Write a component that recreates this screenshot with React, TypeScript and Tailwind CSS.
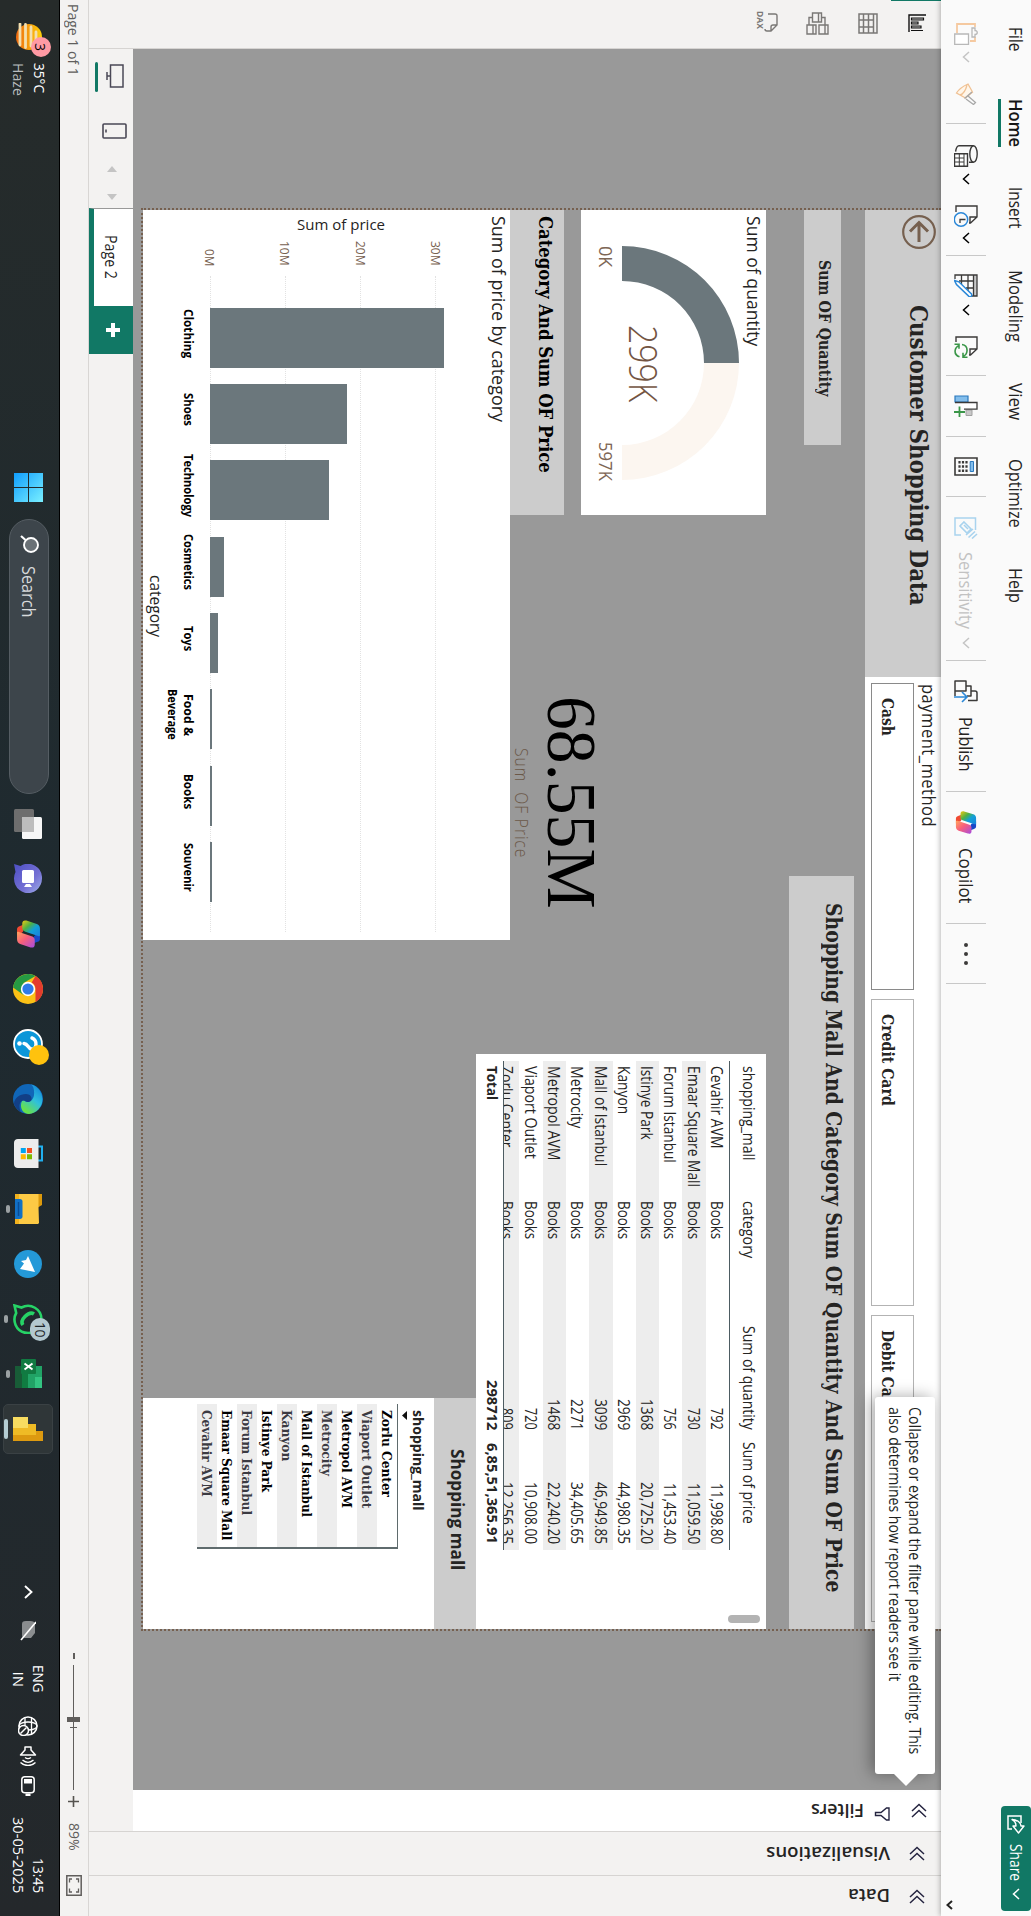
import { useLayoutEffect, useRef, useState } from "react";
import type { ReactNode } from "react";

/* Single line of text stretched to the width of its box. */
function T({ className = "", children }: { className?: string; children: ReactNode }) {
  const box = useRef<HTMLSpanElement>(null);
  const ink = useRef<HTMLSpanElement>(null);
  const [k, setK] = useState(1);
  useLayoutEffect(() => {
    const fit = () => {
      if (box.current && ink.current && ink.current.offsetWidth) {
        setK(box.current.offsetWidth / ink.current.offsetWidth);
      }
    };
    fit();
    document.fonts?.ready.then(fit);
  }, []);
  return (
    <span ref={box} className={`block shrink-0 whitespace-pre ${className}`}>
      <span ref={ink} className="inline-block origin-left" style={{ transform: `scaleX(${k})` }}>
        {children}
      </span>
    </span>
  );
}

const serif = "font-['DejaVu_Serif_Condensed','DejaVu_Serif',serif] font-bold";

function Svg({ className, vb, children }: { className: string; vb: string; children: ReactNode }) {
  return (
    <svg className={`block shrink-0 ${className}`} viewBox={vb} preserveAspectRatio="none" fill="none">
      {children}
    </svg>
  );
}

const Chev = ({ className = "text-[#252423]" }: { className?: string }) => (
  <Svg className={`h-[8px] w-[12px] ${className}`} vb="0 0 12 8">
    <path d="M1 1l5 5.5L11 1" stroke="currentColor" strokeWidth="1.5" />
  </Svg>
);

const Div = ({ className = "" }: { className?: string }) => (
  <span className={`h-[40px] w-px shrink-0 bg-[#c8c8c8] ${className}`} />
);

function Copilot({ className }: { className: string }) {
  return (
    <Svg className={className} vb="0 0 24 24">
      <defs>
        <linearGradient id="cpA" x1="0" y1="1" x2="1" y2="0">
          <stop offset="0" stopColor="#f2c811" />
          <stop offset=".35" stopColor="#4fb043" />
          <stop offset=".6" stopColor="#12a0d8" />
          <stop offset="1" stopColor="#1a80dc" />
        </linearGradient>
        <linearGradient id="cpB" x1="0" y1="1" x2="1" y2="0">
          <stop offset="0" stopColor="#ffa45c" />
          <stop offset=".45" stopColor="#f8607a" />
          <stop offset="1" stopColor="#a64be0" />
        </linearGradient>
      </defs>
      <path d="M11 1h5c1.500 0 2.200.8 2.700 2.300L20 7h-4.500c-1.600 0-2.300-.8-2.800-2.300z" fill="#1848c8" />
      <path d="M13 23H8c-1.500 0-2.200-.8-2.700-2.300L4 17h4.500c1.600 0 2.300.8 2.800 2.300z" fill="#f04a32" />
      <path d="M7.500 1H13c1 0 1 .8.700 1.800L10 15c-.6 2-1.500 3-3.500 3H3C.5 18 0 16 .5 14L3.500 4C4.200 2 5.500 1 7.500 1z" fill="url(#cpA)" />
      <path d="M16.500 23H11c-1 0-1-.8-.7-1.800L14 9c.6-2 1.500-3 3.500-3H21c2.500 0 3 2 2.500 4l-3 10c-.7 2-2 3-4 3z" fill="url(#cpB)" />
    </Svg>
  );
}

function Ribbon() {
  const tab = "text-[18px] leading-[20px] text-[#252423]";
  return (
    <header className="relative z-20 h-[90px] shrink-0 bg-[#fafafa] shadow-[0_1px_5px_rgba(0,0,0,0.28)]">
      <div className="flex h-[45px] items-start pt-[5px]">
        <T className={`ml-[27px] w-[25px] ${tab}`}>File</T>
        <div className="ml-[47px] h-[28px] w-[48px] border-b-[3px] border-[#117865]">
          <T className="w-[48px] text-[18px] leading-[20px] font-semibold text-[#151515]">Home</T>
        </div>
        <T className={`ml-[40px] w-[42px] ${tab}`}>Insert</T>
        <T className={`ml-[41px] w-[72px] ${tab}`}>Modeling</T>
        <T className={`ml-[41px] w-[37px] ${tab}`}>View</T>
        <T className={`ml-[39px] w-[69px] ${tab}`}>Optimize</T>
        <T className={`ml-[40px] w-[35px] ${tab}`}>Help</T>
        <button className="mt-[-5px] mr-[5px] ml-auto flex h-[30px] w-[105px] items-center rounded-[4px] bg-[#117865] text-white">
          <Svg className="ml-[9px] h-[18px] w-[19px]" vb="0 0 19 18">
            <path d="M8 4H1v13h13v-4" stroke="#fff" strokeWidth="1.500" />
            <path d="M11 1l7 5.500-7 5.500V9c-3 0-5 1-6.500 4C5 8 7.500 4.500 11 4z" stroke="#fff" strokeWidth="1.400" strokeLinejoin="round" />
          </Svg>
          <T className="ml-[10px] w-[37px] text-[16px] leading-[20px]">Share</T>
          <Chev className="ml-[7px] text-white" />
        </button>
      </div>
      <div className="flex h-[40px] items-center">
        <Svg className="ml-[23px] h-[24px] w-[22px]" vb="0 0 22 24">
          <path d="M4 3H1v18h9M14 3h4v5" stroke="#f5c9a0" strokeWidth="1.800" />
          <path d="M5 6V3h2.500c0-3 4-3 4 0H14v3z" stroke="#b8b8b8" strokeWidth="1.300" />
          <path d="M11 9.500h10.300v13.800H11z" fill="#fff" stroke="#b8b8b8" strokeWidth="1.300" />
        </Svg>
        <Chev className="ml-[6px] text-[#c4c4c4]" />
        <Svg className="ml-[20px] h-[22px] w-[22px]" vb="0 0 22 22">
          <path d="M1 9l8-4.500 6 7-5 9C6 18 3 13.500 1 9zM2 10c4 1 9 3 10 7" fill="#fff6ea" stroke="#f0c193" strokeWidth="1.300" />
          <path d="M9 5l6.500 7.500M13 9l6.500-7.500 2 2L16 11" stroke="#a8a8a8" strokeWidth="1.300" />
        </Svg>
        <Div className="ml-[18px]" />
        <Svg className="ml-[21px] h-[24px] w-[22px]" vb="0 0 22 24">
          <ellipse cx="9" cy="4.500" rx="8.300" ry="3.700" stroke="#3b3a39" strokeWidth="1.400" />
          <path d="M.7 4.500V19c0 2 3 3 6 3.400M17.300 4.500V9" stroke="#3b3a39" strokeWidth="1.400" />
          <path d="M8.700 10.500h12.600v13H8.700z" fill="#fff" stroke="#3b3a39" strokeWidth="1.400" />
          <path d="M9 14h12M9 18.700h12M13 14v9M17 14v9" stroke="#3b3a39" strokeWidth="1" />
        </Svg>
        <Chev className="ml-[6px]" />
        <Svg className="ml-[20px] h-[24px] w-[22px]" vb="0 0 22 24">
          <path d="M7 22H1V1h11l6 6.500V9M12 1v7h6" stroke="#3b3a39" strokeWidth="1.400" />
          <circle cx="14.500" cy="17" r="6.700" fill="#fafafa" stroke="#2b88d8" strokeWidth="1.500" />
          <path d="M14.500 12.500V18h3.500" stroke="#3b3a39" strokeWidth="1.300" />
        </Svg>
        <Chev className="ml-[5px]" />
        <Div className="ml-[11px]" />
        <Svg className="ml-[18px] h-[24px] w-[23px]" vb="0 0 23 24">
          <path d="M1 1h21v3.500H1z" fill="#c8c8c8" />
          <path d="M5 23H1V1h21v3.500H1M22 4v5M1 10h16M1 16.500h10M7 4.500V19M14 4.500V12" stroke="#3b3a39" strokeWidth="1.300" />
          <path d="M20 6.500c2-1 3.500 1 2.400 2.600L10.500 21.500 6.500 23.500l1.300-4.300z" fill="#fff" stroke="#2b88d8" strokeWidth="1.500" />
        </Svg>
        <Chev className="ml-[7px]" />
        <Svg className="ml-[20px] h-[24px] w-[22px]" vb="0 0 22 24">
          <path d="M6 22H1V1h12l6 6.500V9M13 1v7h6" stroke="#3b3a39" strokeWidth="1.400" />
          <path d="M8.500 16c.6-3.400 3.200-5.300 6.500-5 2.500.2 4.500 1.800 5.300 4M20.800 18.500c-1 3-3.400 4.600-6 4.400-2.400-.2-4.400-1.600-5.400-4M21.300 10.500V15h-4.500M8.300 23.500V19h4.500" stroke="#3a9648" strokeWidth="1.600" />
        </Svg>
        <Div className="ml-[17px]" />
        <Svg className="ml-[19px] h-[24px] w-[22px]" vb="0 0 22 24">
          <path d="M1 10h6v13H1z" fill="#83beec" stroke="#2b78bd" strokeWidth="1.200" />
          <path d="M15 6h5.500v6H15z" fill="#c8c8c8" stroke="#a0a0a0" />
          <path d="M7.500 23V1h6.700v13" fill="#fff" stroke="#3b3a39" strokeWidth="1.300" />
          <path d="M11.500 18.500h10.500M17 13v11" stroke="#3a9648" strokeWidth="1.800" />
        </Svg>
        <Div className="ml-[19px]" />
        <Svg className="ml-[20px] h-[24px] w-[19px]" vb="0 0 19 24">
          <path d="M1 1h17v22H1z" stroke="#3b3a39" strokeWidth="1.600" />
          <path d="M4.500 4.500h10v3.300h-10z" fill="#83beec" stroke="#2b78bd" />
          <path d="M4 11.500h11M4 15h11M4 18.500h11" stroke="#3b3a39" strokeWidth="2.200" strokeDasharray="2.600 1.600" />
        </Svg>
        <Div className="ml-[20px]" />
        <Svg className="ml-[20px] h-[24px] w-[22px]" vb="0 0 22 24">
          <path d="M13 2.500H1V23h17v-6" stroke="#a9d3ee" strokeWidth="1.500" />
          <path d="M5 14l7-7 4 4-7 7zM12 5l6 7M14.500 3l6 6.500M17 1l4.500 5M8 14l4-4" stroke="#a9d3ee" strokeWidth="1.600" />
        </Svg>
        <T className="ml-[13px] w-[77px] text-[18px] leading-[20px] text-[#c2c2c2]">Sensitivity</T>
        <Chev className="ml-[8px] text-[#c4c4c4]" />
        <Div className="ml-[11px]" />
        <Svg className="ml-[19px] h-[24px] w-[23px]" vb="0 0 23 24">
          <path d="M1 12h10v11H1zM6 12V7h10v4M11 7V3c0-1 .7-2 2-2h7.500v9M16 23h-5" stroke="#3b3a39" strokeWidth="1.500" strokeLinejoin="round" />
          <path d="M17 24V11M12 16l5-5 5 5" stroke="#2b88d8" strokeWidth="1.600" />
        </Svg>
        <T className="ml-[14px] w-[55px] text-[18px] leading-[20px] text-[#252423]">Publish</T>
        <Div className="ml-[19px]" />
        <Copilot className="ml-[19px] h-[22px] w-[23px]" />
        <T className="ml-[14px] w-[56px] text-[18px] leading-[20px] text-[#252423]">Copilot</T>
        <Div className="ml-[19px]" />
        <span className="ml-[19px] flex w-[24px] gap-[5px]">
          <i className="size-[4px] rounded-full bg-[#3b3a39]" />
          <i className="size-[4px] rounded-full bg-[#3b3a39]" />
          <i className="size-[4px] rounded-full bg-[#3b3a39]" />
        </span>
        <Div className="ml-[16px]" />
        <Svg className="mt-[32px] mr-[6px] ml-auto h-[7px] w-[10px]" vb="0 0 10 7">
          <path d="M1 1l4 4.500L9 1" stroke="#252423" strokeWidth="2" />
        </Svg>
      </div>
    </header>
  );
}

function LeftNav() {
  return (
    <nav className="relative flex w-[49px] shrink-0 flex-col border-r border-[#d6d4d2] bg-[#f3f2f1]">
      <span className="absolute top-0 left-0 h-[50px] w-[1px] bg-[#117865]" />
      <Svg className="mt-[15px] ml-[14px] h-[18px] w-[18px]" vb="0 0 18 18">
        <path d="M1 0v17h17" stroke="#111" strokeWidth="1.400" />
        <path d="M4 2.500h2v12H4zM8 8h2v6.500H8zM12 5h2v9.500h-2zM16.500 3v12" stroke="#111" strokeWidth="1.200" fill="#bbb" />
      </Svg>
      <Svg className="mt-[30px] ml-[13px] h-[20px] w-[21px]" vb="0 0 21 20">
        <path d="M1 1h19v18H1zM1 4.500h19M1 9.500h19M1 14.500h19M7 4v15M14 4v15" stroke="#7a7876" strokeWidth="1.500" />
      </Svg>
      <Svg className="mt-[29px] ml-[12px] h-[23px] w-[23px]" vb="0 0 23 23">
        <path d="M1 7.500h9v9H1zM13 1h9v9h-9zM13 13h9v9h-9zM1 10.500h9M13 4h9M13 16h9M5.500 7V4H13M5.500 17v3H13" stroke="#7a7876" strokeWidth="1.400" />
      </Svg>
      <div className="mt-[28px] ml-[11px] h-[28px] w-[24px]">
        <Svg className="h-[14px] w-[22px]" vb="0 0 22 14">
          <path d="M3 10V3c0-1.500.5-2 2-2h9l6 6v4c0 1.500-.5 2-2 2M14 1v4c0 1.500.5 2 2 2h4" stroke="#7a7876" strokeWidth="1.400" />
        </Svg>
        <T className="w-[18px] text-[9.500px] leading-[8px] font-bold text-[#7a7876]">DAX</T>
      </div>
    </nav>
  );
}

const bars = [
  { label: "Clothing", h: 234, cls: "w-[49px]" },
  { label: "Shoes", h: 137, cls: "w-[33px]" },
  { label: "Technology", h: 119, cls: "w-[63px]" },
  { label: "Cosmetics", h: 14, cls: "w-[56px]" },
  { label: "Toys", h: 8, cls: "w-[25px]" },
  { label: "Food &", h: 2, cls: "w-[42px]", second: "Beverage" },
  { label: "Books", h: 2, cls: "w-[35px]" },
  { label: "Souvenir", h: 2, cls: "w-[49px]" },
];

function PriceChart() {
  return (
    <section className="absolute top-[431px] left-[161px] h-[367px] w-[730px] bg-white">
      <T className="ml-[6px] w-[206px] pt-px text-[18px] leading-[20px] text-[#252423]">Sum of price by category</T>
      <div className="mt-[48px] flex h-[231px]">
        <div className="ml-[6px] flex w-[15px] items-start justify-center pt-[56px]">
          <span className="rotate-180 text-[15px] leading-[20px] text-[#252423] [writing-mode:vertical-rl]">
            Sum of price
          </span>
        </div>
        <div className="ml-[10px] flex h-[237px] w-[25px] flex-col items-end justify-between text-[12.500px] leading-[11px] text-[#76604f]">
          <T className="w-[25px]">30M</T>
          <T className="w-[25px]">20M</T>
          <T className="w-[25px]">10M</T>
          <T className="w-[17px]">0M</T>
        </div>
        <div className="relative ml-[10px] h-[231px] w-[656px]">
          <div className="flex h-[231px] flex-col justify-between pt-[5px]">
            <i className="border-t border-dotted border-[#e2e2e2]" />
            <i className="border-t border-dotted border-[#e2e2e2]" />
            <i className="border-t border-dotted border-[#e2e2e2]" />
            <i className="border-t border-dotted border-[#e2e2e2]" />
          </div>
          <div className="absolute bottom-0 left-[31.500px] flex items-end gap-[16.400px]">
            {bars.map((b) => (
              <span key={b.label} className="w-[60px] bg-[#6b777c]" style={{ height: b.h }} />
            ))}
          </div>
        </div>
      </div>
      <div className="mt-[14px] ml-[89px] flex h-[31px] gap-[8.400px] text-[12px] leading-[16px] font-bold text-black">
        {bars.map((b) => (
          <div key={b.label} className="flex w-[68px] flex-col items-center">
            <T className={b.cls}>{b.label}</T>
            {b.second && <T className="w-[51px]">{b.second}</T>}
          </div>
        ))}
      </div>
      <T className="ml-[365px] w-[62px] text-[15.500px] leading-[18px] text-[#252423]">category</T>
    </section>
  );
}

const mallRows = [
  ["Cevahir AVM", "792", "11,998.80", "w-[83px]", "w-[22px]", "w-[61px]"],
  ["Emaar Square Mall", "730", "11,059.50", "w-[121px]", "w-[22px]", "w-[61px]"],
  ["Forum Istanbul", "756", "11,453.40", "w-[97px]", "w-[22px]", "w-[61px]"],
  ["Istinye Park", "1368", "20,725.20", "w-[74px]", "w-[31px]", "w-[62px]"],
  ["Kanyon", "2969", "44,980.35", "w-[48px]", "w-[31px]", "w-[62px]"],
  ["Mall of Istanbul", "3099", "46,949.85", "w-[100px]", "w-[31px]", "w-[62px]"],
  ["Metrocity", "2271", "34,405.65", "w-[62px]", "w-[31px]", "w-[62px]"],
  ["Metropol AVM", "1468", "22,240.20", "w-[95px]", "w-[31px]", "w-[62px]"],
  ["Viaport Outlet", "720", "10,908.00", "w-[93px]", "w-[22px]", "w-[62px]"],
  ["Zorlu Center", "809", "12,256.35", "w-[82px]", "w-[22px]", "w-[62px]"],
];

function MallTable() {
  return (
    <section className="absolute top-[175px] left-[1005px] h-[290px] w-[575px] bg-white text-[15.500px] text-[#252423]">
      <div className="ml-[7px] w-[489px]">
        <div className="flex h-[37px] border-b border-[#4d5c62] pt-[7px] leading-[20px]">
          <T className="ml-[5px] w-[95px]">shopping_mall</T>
          <T className="ml-[40px] w-[57px]">category</T>
          <T className="ml-[68px] w-[104px]">Sum of quantity</T>
          <T className="ml-[12px] w-[82px]">Sum of price</T>
        </div>
        <div className="h-[226px] overflow-hidden border-b border-[#4d5c62]">
          {mallRows.map((r, i) => (
            <div key={r[0]} className={`flex h-[23.300px] pt-[2px] leading-[20px] ${i % 2 ? "bg-[#ededed]" : ""}`}>
              <div className="w-[140px] pl-[5px]">
                <T className={r[3]}>{r[0]}</T>
              </div>
              <T className="w-[38px]">Books</T>
              <div className="flex w-[191px] justify-end">
                <T className={r[4]}>{r[1]}</T>
              </div>
              <div className="flex w-[114px] justify-end">
                <T className={r[5]}>{r[2]}</T>
              </div>
            </div>
          ))}
        </div>
        <div className="flex text-[15px] leading-[20px] font-bold">
          <T className="ml-[5px] w-[34px]">Total</T>
          <T className="ml-[280px] w-[50px]">298712</T>
          <T className="ml-[13px] w-[101px]">6,85,51,365.91</T>
        </div>
      </div>
      <span className="absolute top-[6px] right-[6px] h-[32px] w-[8px] rounded-full bg-[#b3b3b3]" />
    </section>
  );
}

const malls = [
  ["Zorlu Center", "w-[87px]"],
  ["Viaport Outlet", "w-[98px]"],
  ["Metropol AVM", "w-[98px]"],
  ["Metrocity", "w-[66px]"],
  ["Mall of Istanbul", "w-[107px]"],
  ["Kanyon", "w-[51px]"],
  ["Istinye Park", "w-[82px]"],
  ["Forum Istanbul", "w-[105px]"],
  ["Emaar Square Mall", "w-[130px]"],
  ["Cevahir AVM", "w-[87px]"],
];

function MallList() {
  return (
    <section className="absolute top-[465px] left-[1349px] h-[333px] w-[231px] bg-white">
      <div className="h-[42px] bg-[#cccccc] pt-[8px] pl-[51px]">
        <T className="w-[121px] text-[18px] leading-[20px] font-bold text-[#252423]">Shopping mall</T>
      </div>
      <div className="ml-[6px] w-[145px] pt-[5px]">
        <T className="ml-[6px] w-[101px] text-[15px] leading-[20px] font-bold text-[#252423]">shopping_mall</T>
        <Svg className="mt-[2px] ml-[7px] h-[5px] w-[9px]" vb="0 0 9 5">
          <path d="M0 0h9L4.500 5z" fill="#111" />
        </Svg>
        <div className="mt-[4px] border-t border-r-2 border-[#5f6b6d]">
          {malls.map((m, i) => (
            <div key={m[0]} className={`h-[20px] pl-[6px] ${i % 2 ? "bg-[#ededed] text-[#3b3a42]" : "text-black"}`}>
              <T className={`text-[13.500px] leading-[20px] ${serif} ${m[1]}`}>{m[0]}</T>
            </div>
          ))}
        </div>
      </div>
    </section>
  );
}

function Gauge() {
  return (
    <section className="absolute top-[175px] left-[161px] h-[185px] w-[305px] bg-white pt-[2px]">
      <T className="ml-[6px] w-[130px] text-[18px] leading-[20px] text-[#252423]">Sum of quantity</T>
      <div className="relative mt-[5px] ml-[35.500px] w-[234px]">
        <Svg className="h-[117px] w-[234px]" vb="0 0 234 117">
          <path d="M0 117A117 117 0 0 1 117 0v35a82 82 0 0 0-82 82z" fill="#6b777c" />
          <path d="M234 117A117 117 0 0 0 117 0v35a82 82 0 0 1 82 82z" fill="#fcf6f0" />
        </Svg>
        <T className="absolute top-[75px] left-[79px] w-[77px] text-[39px] leading-[40px] font-light text-[#735442]">299K</T>
      </div>
      <div className="mt-[6px] flex text-[18px] leading-[20px] text-[#7d6655]">
        <T className="ml-[36px] w-[21px]">0K</T>
        <T className="ml-[175px] w-[39px]">597K</T>
      </div>
    </section>
  );
}

function Slicer() {
  return (
    <section className="absolute top-0 left-[628px] h-[76px] w-[952px] bg-white pt-[2px]">
      <T className="ml-[7px] w-[143px] text-[17.500px] leading-[20px] tracking-[0.500px] text-[#252423]">payment_method</T>
      <div className="mt-[5px] ml-[6px] flex gap-[9px]">
        <div className="h-[43px] w-[307px] border border-[#8a8a8a] pt-[15px] pl-[14px]">
          <T className={`w-[38px] text-[17px] leading-[20px] text-[#252423] ${serif}`}>Cash</T>
        </div>
        <div className="h-[43px] w-[307px] border border-[#b3b3b3] pt-[15px] pl-[14px]">
          <T className={`w-[92px] text-[17px] leading-[20px] text-[#252423] ${serif}`}>Credit Card</T>
        </div>
        <div className="h-[43px] w-[307px] border border-[#b3b3b3] pt-[15px] pl-[14px]">
          <T className={`w-[84px] text-[17px] leading-[20px] text-[#252423] ${serif}`}>Debit Card</T>
        </div>
      </div>
    </section>
  );
}

function Canvas() {
  return (
    <div className="relative w-[1741px] shrink-0 bg-[#999999]">
      <div className="absolute top-0 left-[159px] h-[800px] w-[1423px] border-x-2 border-b-2 border-dotted border-[#76604f]" />

      <section className="absolute top-0 left-[161px] flex h-[76px] w-[467px] bg-[#cccccc]">
        <Svg className="mt-[5px] ml-[5px] h-[34px] w-[34px]" vb="0 0 34 34">
          <circle cx="17" cy="17" r="15.800" stroke="#76604f" strokeWidth="2.200" />
          <path d="M27 17H8M16.500 8L7.500 17l9 9" stroke="#76604f" strokeWidth="3" />
        </Svg>
        <T className={`mt-[8px] ml-[56px] w-[301px] text-[25px] leading-[30px] text-[#252423] ${serif}`}>
          Customer Shopping Data
        </T>
      </section>

      <Slicer />

      <section className="absolute top-[100px] left-[161px] h-[37px] w-[235px] bg-[#cccccc] pt-[6px] pl-[50px]">
        <T className={`w-[137px] text-[17px] leading-[20px] text-[#252423] ${serif}`}>Sum OF Quantity</T>
      </section>

      <section className="absolute top-[87px] left-[827px] h-[65px] w-[753px] bg-[#cccccc] pt-[7px] pl-[27px]">
        <T className={`w-[689px] text-[22.500px] leading-[26px] text-[#252423] ${serif}`}>
          Shopping Mall And Category Sum OF Quantity And Sum OF Price
        </T>
      </section>

      <Gauge />

      <section className="absolute top-[377px] left-[161px] h-[54px] w-[305px] bg-[#cccccc] pt-[8px] pl-[6px]">
        <T className={`w-[257px] text-[19px] leading-[20px] text-black ${serif}`}>Category And Sum OF Price</T>
      </section>

      <section className="absolute top-[335px] left-[647px] w-[212px]">
        <T className="w-[213px] font-['Liberation_Serif',serif] text-[69px] leading-[70px] text-black">68.55M</T>
        <T className="mt-[4px] ml-[52px] w-[110px] text-[18px] leading-[20px] font-light tracking-[1px] text-[#6b5848]">
          Sum  OF Price
        </T>
      </section>

      <PriceChart />
      <MallTable />
      <MallList />

      <div className="absolute top-[6px] left-[1348px] z-10 h-[60px] w-[377px] rounded-[3px] bg-white pt-[10px] pl-[10px] text-[15.500px] leading-[20px] text-[#201f1e] shadow-[0_4px_16px_rgba(0,0,0,0.35)]">
        <T className="w-[347px]">Collapse or expand the filter pane while editing. This</T>
        <T className="w-[274px]">also determines how report readers see it</T>
        <Svg className="absolute top-[16px] -right-[12px] h-[26px] w-[13px]" vb="0 0 13 26">
          <path d="M0 0l13 13L0 26z" fill="#fff" />
        </Svg>
      </div>
    </div>
  );
}

const Collapse = () => (
  <Svg className="h-[16px] w-[15px]" vb="0 0 15 16">
    <path d="M8 1L1.500 8 8 15M14 1L7.500 8l6.500 7" stroke="#252440" strokeWidth="1.500" />
  </Svg>
);

/* Text running downwards along a collapsed pane. */
const sideText = "leading-[20px] font-semibold text-[#252423] [writing-mode:vertical-rl]";

function PageBar() {
  return (
    <div className="flex h-[44px] shrink-0 bg-[#f3f2f1]">
      <div className="relative ml-[13px] w-[30px]">
        <Svg className="mt-[9px] ml-[2px] h-[18px] w-[24px]" vb="0 0 24 18">
          <path d="M1 1h22v12.500H1zM12 13.500V17M8 17h8" stroke="#4a4856" strokeWidth="1.500" />
        </Svg>
        <span className="absolute bottom-[6px] left-0 h-[3px] w-[30px] rounded-full bg-[#117865]" />
      </div>
      <Svg className="mt-[6px] ml-[31px] h-[25px] w-[16px]" vb="0 0 16 25">
        <rect x="1" y="1" width="14" height="23" rx="1" stroke="#4a4856" strokeWidth="1.600" />
        <path d="M6.500 21h3" stroke="#4a4856" strokeWidth="1.600" />
      </Svg>
      <Svg className="mt-[16px] ml-[27px] h-[10px] w-[6px]" vb="0 0 6 10">
        <path d="M6 0v10L0 5z" fill="#c4c4c4" />
      </Svg>
      <Svg className="mt-[16px] ml-[22px] h-[10px] w-[6px]" vb="0 0 6 10">
        <path d="M0 0v10l6-5z" fill="#c4c4c4" />
      </Svg>
      <div className="ml-[8px] h-[44px] w-[98px] border-b-[5px] border-l border-b-[#117865] border-l-[#999] bg-white pt-[12px] pl-[26px]">
        <T className="w-[44px] text-[15.500px] leading-[20px] font-medium text-[#252423]">Page 2</T>
      </div>
      <div className="flex w-[48px] items-start justify-center bg-[#117865] pt-[13px]">
        <Svg className="size-[14px]" vb="0 0 14 14">
          <path d="M7 0v14M0 7h14" stroke="#fff" strokeWidth="4" />
        </Svg>
      </div>
    </div>
  );
}

function StatusBar() {
  return (
    <div className="flex h-[29px] shrink-0 items-center border-t border-[#d8d6d4] bg-[#f3f2f1] text-[#605e5c]">
      <T className="ml-[4px] w-[72px] pb-px text-[15px] leading-[20px]">Page 1 of 1</T>
      <span className="ml-auto h-[2px] w-[6px] bg-[#605e5c]" />
      <div className="ml-[6px] flex w-[125px] items-center">
        <i className="h-px w-[52px] bg-[#605e5c]" />
        <i className="h-[13px] w-[5px] bg-[#605e5c]" />
        <i className="h-px w-[5px] bg-[#605e5c]" />
        <i className="h-[7px] w-px bg-[#605e5c]" />
        <i className="h-px w-[62px] bg-[#605e5c]" />
      </div>
      <Svg className="ml-[6px] size-[11px]" vb="0 0 11 11">
        <path d="M5.500 0v11M0 5.500h11" stroke="#55534f" strokeWidth="1.600" />
      </Svg>
      <T className="ml-[16px] w-[28px] text-[14.500px] leading-[20px]">89%</T>
      <Svg className="mr-[20px] ml-[24px] h-[16px] w-[21px]" vb="0 0 21 16">
        <path d="M.8.8h19.400v14.400H.8z" stroke="#605e5c" strokeWidth="1.500" />
        <path d="M4 6V3.500h3.500M13.500 3.500H17V6M17 10v2.500h-3.500M7.500 12.500H4V10" stroke="#605e5c" strokeWidth="1.300" />
      </Svg>
    </div>
  );
}

const Run = () => (
  <span className="absolute bottom-[-9px] left-[11px] h-[4px] w-[8px] rounded-full bg-[#9ba1a3]" />
);

function Taskbar() {
  return (
    <footer className="flex h-[60px] shrink-0 items-center border-t border-black bg-linear-to-r from-[#262b2a] via-[#1e2a30] to-[#24282b] pt-[2px] text-white">
      <div className="relative ml-[23px] h-[27px] w-[27px]">
        <Svg className="size-[27px]" vb="0 0 27 27">
          <defs>
            <linearGradient id="sun" x1="0" y1="0" x2="0" y2="1">
              <stop offset="0" stopColor="#ffd20a" />
              <stop offset="1" stopColor="#ee6a10" />
            </linearGradient>
          </defs>
          <circle cx="14" cy="13" r="13" fill="url(#sun)" />
          <path d="M4 11h19M9 6h15M1.500 16.500h23M1 22h21" stroke="#f3dfae" strokeWidth="2.800" strokeLinecap="round" />
        </Svg>
        <span className="absolute -top-[9px] left-[14px] flex size-[20px] items-center justify-center rounded-full bg-[#ff9aa4] text-[14px] text-black">
          3
        </span>
      </div>
      <div className="-mt-[2px] ml-[13px] w-[33px] text-[15px] leading-[20.500px]">
        <T className="w-[30px]">35°C</T>
        <T className="w-[33px] text-[#b9bdbe]">Haze</T>
      </div>
      <Svg className="ml-[377px] h-[29px] w-[29px]" vb="0 0 29 29">
        <defs>
          <linearGradient id="win" x1="1" y1="0" x2="0" y2="1">
            <stop offset="0" stopColor="#7af0ff" />
            <stop offset="1" stopColor="#109dfd" />
          </linearGradient>
        </defs>
        <path d="M0 0h14v14H0zM15 0h14v14H15zM0 15h14v14H0zM15 15h14v14H15z" fill="url(#win)" />
      </Svg>
      <div className="-mt-[2px] ml-[17px] flex h-[40px] w-[275px] items-center rounded-full border border-[#555d63] bg-[#3d454b]">
        <Svg className="ml-[15px] h-[19px] w-[18px]" vb="0 0 18 19">
          <circle cx="10" cy="8" r="7" stroke="#fff" strokeWidth="1.900" fill="#6a7176" />
          <path d="M5 13.500L1 18" stroke="#fff" strokeWidth="2.200" />
        </Svg>
        <T className="ml-[13px] w-[51px] text-[17.500px] leading-[24px] text-[#d8dadb]">Search</T>
      </div>
      <Svg className="ml-[15px] h-[28px] w-[30px]" vb="0 0 30 28">
        <rect x="0" y="8" width="23" height="20" rx="1.500" fill="#6e6e6e" />
        <rect x="8" y="0" width="22" height="20" rx="1.500" fill="#f6f6f6" />
        <path d="M8 8h15v12H8z" fill="#bdbdbd" />
      </Svg>
      <Svg className="ml-[25px] h-[28px] w-[29px]" vb="0 0 29 28">
        <defs>
          <linearGradient id="chat" x1="0" y1="1" x2="1" y2="0">
            <stop offset="0" stopColor="#4d4fc4" />
            <stop offset=".6" stopColor="#7570d4" />
            <stop offset="1" stopColor="#9fb0ea" />
          </linearGradient>
        </defs>
        <path d="M14.500 0A14.500 14 0 1 1 8 26.500L0 28l2-6.500A14 14 0 0 1 14.500 0z" fill="url(#chat)" />
        <rect x="6" y="8" width="13" height="12" rx="1.500" fill="#fff" />
        <path d="M20 12l3-2v8l-3-2z" fill="#fff" />
      </Svg>
      <Copilot className="ml-[27px] h-[25px] w-[28px]" />
      <Svg className="ml-[26px] h-[30px] w-[30px]" vb="0 0 30 30">
        <circle cx="15" cy="15" r="15" fill="#fbc116" />
        <path d="M2 7.500A15 15 0 0 1 28 7.500H15a7.500 7.500 0 0 0-6.500 3.800z" fill="#e33b2e" />
        <path d="M2 7.500a15 15 0 0 0 11.500 22.400L21 19.500H9z" fill="#269a43" />
        <circle cx="15" cy="15" r="7.200" fill="#fff" />
        <circle cx="15" cy="15" r="5.600" fill="#2f7be8" />
      </Svg>
      <div className="relative ml-[25px] size-[30px]">
        <Svg className="size-[30px]" vb="0 0 30 30">
          <circle cx="15" cy="15" r="14" fill="#0c96d8" stroke="#fff" strokeWidth="1.800" />
          <path d="M9 11c2-6 13-5 11 1-1 3-5 3-5.500 7" stroke="#fff" strokeWidth="3.500" strokeLinecap="round" />
          <circle cx="14.500" cy="23.500" r="2.300" fill="#fff" />
        </Svg>
        <span className="absolute -top-[6px] left-[16px] size-[20px] rounded-full bg-[#ffc20e]" />
      </div>
      <Svg className="ml-[25px] h-[30px] w-[30px]" vb="0 0 30 30">
        <defs>
          <linearGradient id="edge" x1="0" y1="0" x2="1" y2=".6">
            <stop offset="0" stopColor="#0f7bd8" />
            <stop offset=".55" stopColor="#2fc0dc" />
            <stop offset="1" stopColor="#67e04c" />
          </linearGradient>
        </defs>
        <circle cx="15" cy="15" r="15" fill="#1066b8" />
        <path d="M.5 12A15 15 0 0 1 30 14c0 5-4 8-8.500 8S15 20 17.500 17.500C19.500 14 16 9.500 11 9 6 8.500 2 9.500.5 12z" fill="url(#edge)" />
        <path d="M10 17c0-4 3-6 5.500-5.500 2 .5 3 3 2 5.500-2.500 3 0 6.500 5 6.500 2.500 0 4.500-.8 5.500-1.500A15 15 0 0 1 20 29C14 29 10 23 10 17z" fill="#123f86" />
      </Svg>
      <Svg className="ml-[25px] h-[29px] w-[29px]" vb="0 0 29 29">
        <path d="M7.500 5V1h14v4" stroke="#20b0f0" strokeWidth="2" />
        <path d="M0 4.500h29V25c0 2.500-1.500 4-4 4H4c-2.500 0-4-1.500-4-4z" fill="#ececec" />
        <path d="M9 11h5v5H9z" fill="#f25022" />
        <path d="M15.200 11h5v5h-5z" fill="#7fba00" />
        <path d="M9 17.200h5v5H9z" fill="#00a4ef" />
        <path d="M15.200 17.200h5v5h-5z" fill="#ffb900" />
      </Svg>
      <div className="relative ml-[26px]">
        <Svg className="h-[27px] w-[30px]" vb="0 0 30 27">
          <path d="M0 0h11l3 5H0z" fill="#dd9a0c" />
          <path d="M0 3.500h13L29 3l1 1v22H0z" fill="#fdca45" />
          <path d="M0 23h30v4H0z" fill="#f2b21e" />
          <path d="M5 27v-5c0-1.500 1-2.500 2.500-2.500h15c1.500 0 2.500 1 2.500 2.500v5z" fill="#1270c4" />
          <path d="M8 23.500h14" stroke="#0a4c94" strokeWidth="1.500" />
        </Svg>
        <Run />
      </div>
      <Svg className="ml-[26px] h-[28px] w-[28px]" vb="0 0 28 28">
        <circle cx="14" cy="14" r="14" fill="#2499d8" />
        <path d="M6 14L22 7l-3 15-5.500-4-2.500 3-1-5z" fill="#fff" />
      </Svg>
      <div className="relative ml-[26px] size-[30px]">
        <Svg className="size-[30px]" vb="0 0 30 30">
          <path d="M15.500 1.500a13.500 13.500 0 1 1-6.500 25.300L1.500 28.500l2-7A13.500 13.500 0 0 1 15.500 1.500z" stroke="#26d366" strokeWidth="2.600" />
          <path d="M10 9c-2 3 0 6.500 2.500 9s6 4 8.500 2" stroke="#26d366" strokeWidth="3.600" />
        </Svg>
        <span className="absolute -top-[7px] left-[14px] flex h-[20px] w-[23px] items-center justify-center rounded-full bg-[#b3c8cf] text-[14px] leading-none tracking-[-0.500px] text-[#1d2529]">
          10
        </span>
        <Run />
      </div>
      <div className="relative ml-[25px]">
        <Svg className="h-[27px] w-[29px]" vb="0 0 29 27">
          <path d="M7 0h22v27H7z" fill="#21a366" />
          <path d="M18 0h11v7H18z" fill="#33c481" />
          <path d="M7 14h11v6H7zM18 14h11v6H18z" fill="#107c41" />
          <path d="M7 20h22v7H7z" fill="#185c37" />
          <rect x="0" y="6" width="15" height="15" rx="1" fill="#117a42" />
          <path d="M4.500 9.500l6 8M10.500 9.500l-6 8" stroke="#fff" strokeWidth="2" />
        </Svg>
        <Run />
      </div>
      <div className="relative ml-[16px] flex size-[50px] items-center justify-center rounded-[5px] border border-[#3a4144] bg-[#2f3638]">
        <Svg className="h-[30px] w-[24px]" vb="0 0 24 30">
          <path d="M14 0h10v30H14z" fill="#dd9a10" />
          <path d="M7 7h11v23H7z" fill="#efbb25" />
          <path d="M0 15h11v15H0z" fill="#f8dc60" />
        </Svg>
        <span className="absolute bottom-0 left-[14px] h-[4px] w-[20px] rounded-full bg-[#b5cdd3]" />
      </div>
      <Svg className="ml-[131px] h-[9px] w-[14px]" vb="0 0 14 9">
        <path d="M1 8l6-6.500L13 8" stroke="#fff" strokeWidth="1.900" />
      </Svg>
      <Svg className="ml-[22px] h-[16px] w-[20px]" vb="0 0 20 16">
        <path d="M3 1h9l5 4v6c0 2-1 3-3 3H3c-2 0-3-1-3-4V6c0-3 1-5 3-5z" fill="#8a8d8f" />
        <path d="M1 0l18 15" stroke="#fff" strokeWidth="1.600" />
      </Svg>
      <div className="-mt-[2px] ml-[24px] flex w-[28px] flex-col items-center text-[15px] leading-[20px]">
        <T className="w-[28px]">ENG</T>
        <T className="w-[15px]">IN</T>
      </div>
      <Svg className="ml-[23px] size-[20px]" vb="0 0 20 20">
        <circle cx="10" cy="10" r="9" stroke="#fff" strokeWidth="1.500" />
        <ellipse cx="10" cy="10" rx="4" ry="9" stroke="#fff" strokeWidth="1.300" />
        <path d="M2 6.500h16M2 13h16" stroke="#fff" strokeWidth="1.300" />
        <circle cx="14.500" cy="14.500" r="5" fill="#24282b" stroke="#fff" strokeWidth="1.500" />
        <path d="M11.500 11.500l6 6" stroke="#fff" strokeWidth="1.500" />
      </Svg>
      <Svg className="ml-[10px] h-[18px] w-[20px]" vb="0 0 20 18">
        <path d="M1 6h3l5-4.500v15L4 12H1z" stroke="#fff" strokeWidth="1.500" strokeLinejoin="round" />
        <path d="M11.500 6c1.500 2 1.500 4 0 6M14 3.500c3 3.500 3 7.500 0 11M16.500 1.500c4 4.500 4 10.500 0 15" stroke="#fff" strokeWidth="1.400" />
      </Svg>
      <Svg className="ml-[10px] h-[14px] w-[20px]" vb="0 0 20 14">
        <rect x=".8" y=".8" width="16" height="12.400" rx="3" stroke="#fff" strokeWidth="1.500" />
        <path d="M3 3h4.500v8H3zM17.500 4.500H20v5h-2.500z" fill="#fff" />
      </Svg>
      <div className="-mt-[2px] ml-[21px] flex w-[76px] flex-col items-end text-[15px] leading-[20px]">
        <T className="w-[35px]">13:45</T>
        <T className="w-[76px]">30-05-2025</T>
      </div>
    </footer>
  );
}

export default function App() {
  return (
    <div className="relative h-[1916px] w-[1031px] overflow-hidden bg-[#f3f2f1]">
      <div className="flex h-[1031px] w-[1916px] origin-top-left translate-x-[1031px] rotate-90 flex-col overflow-hidden font-['Open_Sans','Noto_Sans',sans-serif]">
        <Ribbon />
        <div className="flex h-[852px] shrink-0">
          <LeftNav />
          <div className="flex w-[1782px] shrink-0 flex-col">
            <div className="flex h-[808px] shrink-0">
              <Canvas />
              <aside className="flex flex-1 flex-col items-center bg-white pt-[14px]">
                <Collapse />
                <Svg className="mt-[21px] ml-[6px] h-[16px] w-[14px]" vb="0 0 14 16">
                  <path d="M1 1h12v2.500L8.500 9v5.500h-3V9L1 3.500z" stroke="#252440" strokeWidth="1.400" />
                </Svg>
                <span className={`mt-[10px] text-[17.800px] ${sideText}`}>Filters</span>
              </aside>
            </div>
            <PageBar />
          </div>
          <aside className="flex w-[44px] shrink-0 flex-col items-center border-l border-[#d6d4d2] bg-[#f3f2f1] pt-[16px]">
            <Collapse />
            <span className={`mt-[19px] text-[18.700px] ${sideText}`}>Visualizations</span>
          </aside>
          <aside className="flex w-[41px] shrink-0 flex-col items-center border-l border-[#d6d4d2] bg-[#f3f2f1] pt-[16px]">
            <Collapse />
            <span className={`mt-[19px] text-[18.300px] ${sideText}`}>Data</span>
          </aside>
        </div>
        <StatusBar />
        <Taskbar />
      </div>
    </div>
  );
}
